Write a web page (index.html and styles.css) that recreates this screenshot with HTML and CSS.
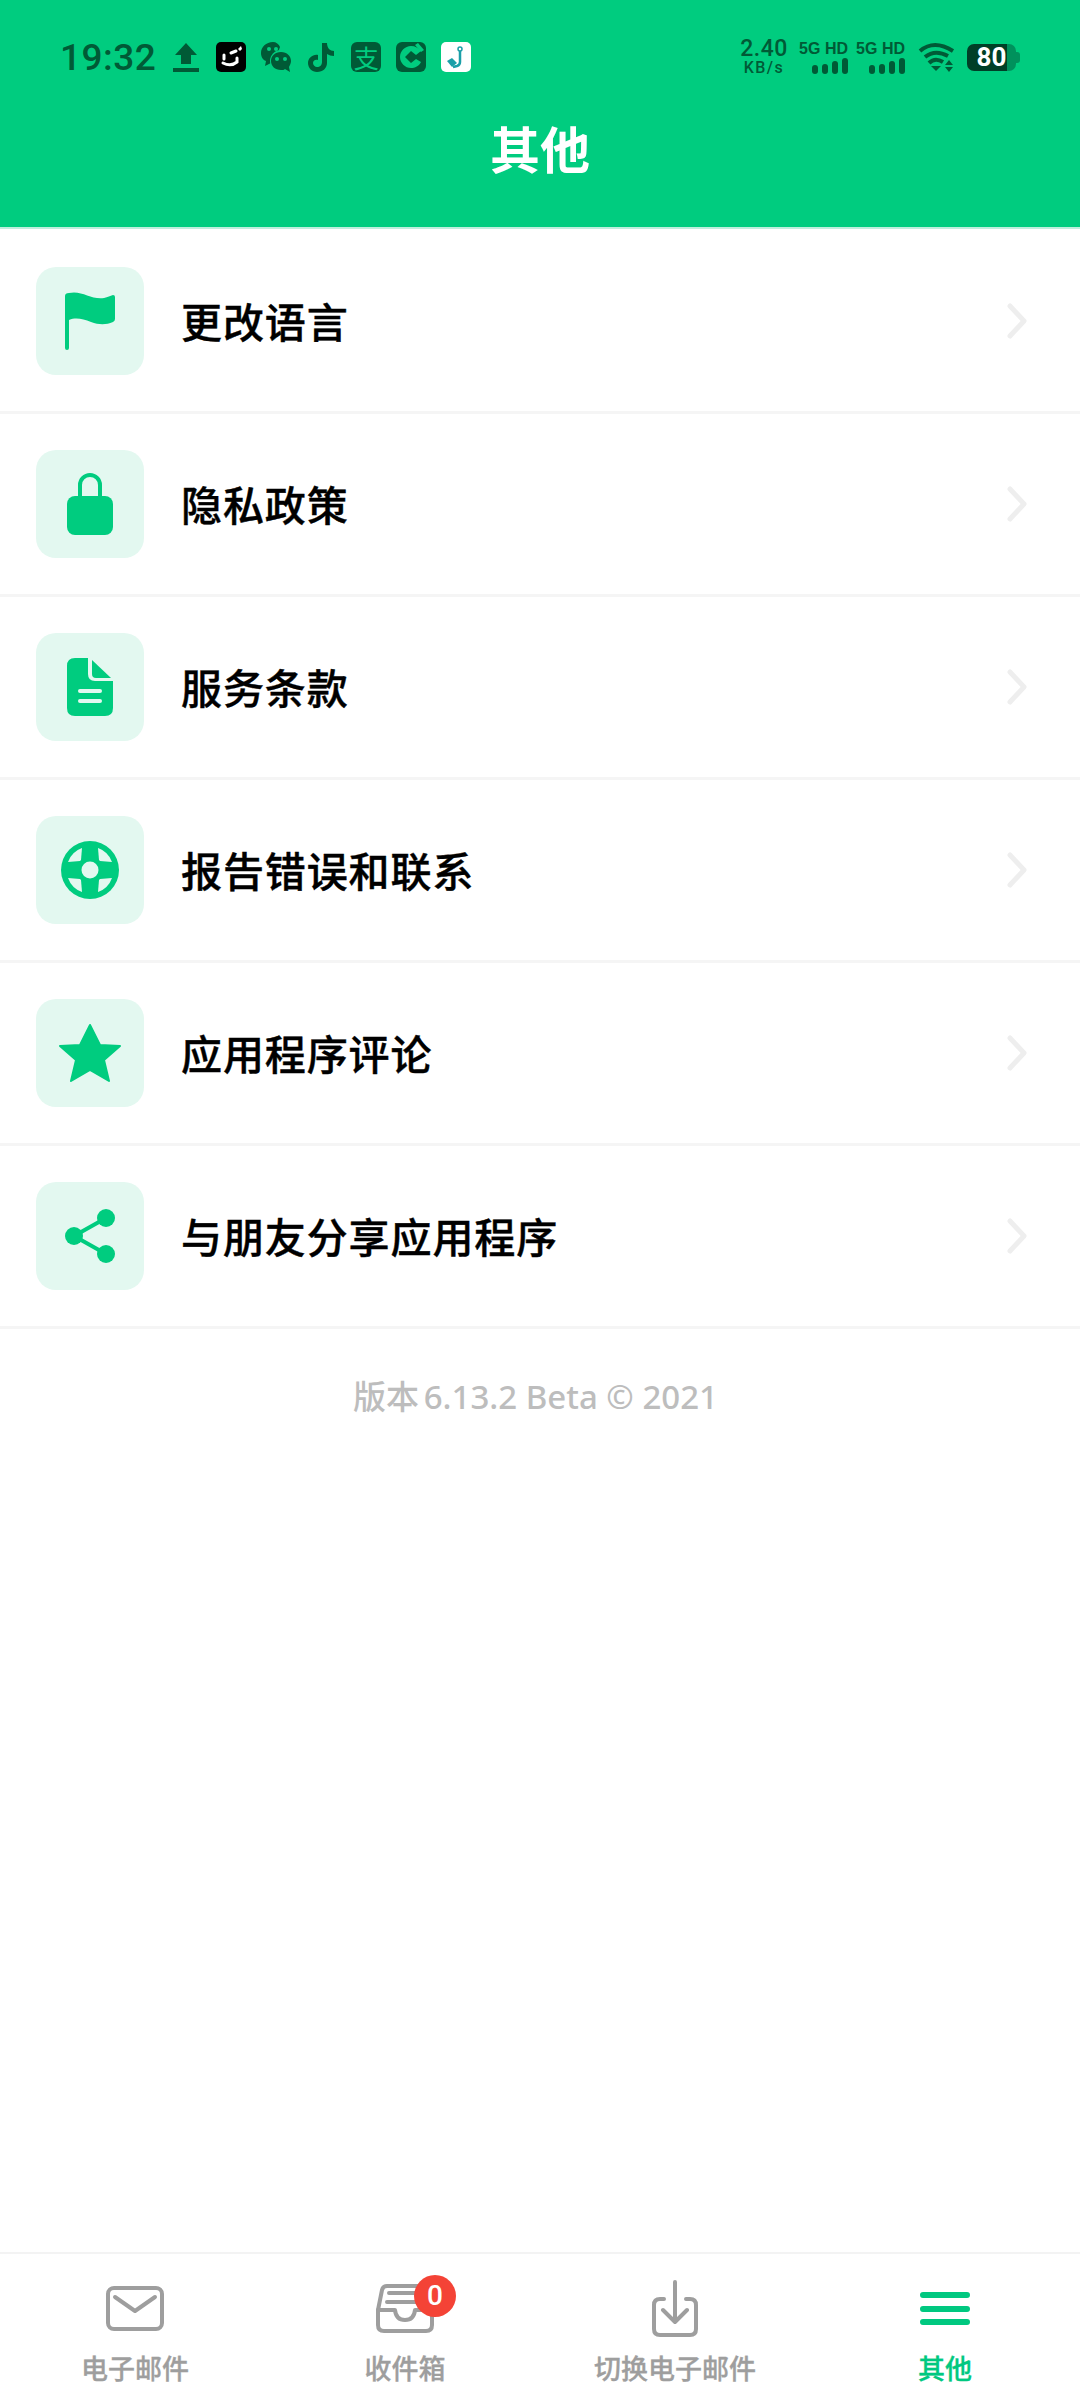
FILE: index.html
```html
<!DOCTYPE html>
<html lang="zh-CN">
<head>
    <meta charset="UTF-8">
    <meta name="viewport" content="width=device-width, initial-scale=1.0">
    <title>其他</title>
    <link rel="stylesheet" href="styles.css">
</head>
<body>

<div class="app">

    <!-- Green header with status bar -->
    <header class="header">
        <div class="status">
            <div class="status-left">
                <span class="time">19:32</span>
                <svg class="app-icon" viewBox="0 0 30 30"><path d="M15 1 L26 13 H20 V22 H10 V13 H4 Z" fill="#005a36"/><rect x="2" y="26" width="26" height="4" fill="#005a36"/></svg>
                <svg class="app-icon" viewBox="0 0 30 30"><rect width="30" height="30" rx="5" fill="#000"/><path d="M8 13 V17" stroke="#fff" stroke-width="3" stroke-linecap="round"/><path d="M7 21 Q15 25 21 20 V16" stroke="#fff" stroke-width="3" fill="none" stroke-linecap="round"/><path d="M15 11 L20 9" stroke="#fff" stroke-width="3" stroke-linecap="round"/><path d="M25 4 L26 7 L24 9 L22 7 Z" fill="#fff"/></svg>
                <svg class="app-icon" viewBox="0 0 30 30"><path d="M12 0 C5 0 0 5 0 11 C0 15 2 18 5 19 L4 24 L10 21 C12 21 13 22 13 22 L19 5 C18 2 15 0 12 0 Z" fill="#005a36"/><circle cx="20" cy="19" r="11" fill="#00cc7f"/><path d="M20 10 C14 10 10 14 10 19 C10 24 14 28 20 28 C22 28 23 28 24 27 L29 30 L28 25 C29 23 30 21 30 19 C30 14 26 10 20 10 Z" fill="#005a36"/><circle cx="8" cy="7" r="2" fill="#00cc7f"/><circle cx="15" cy="7" r="2" fill="#00cc7f"/><circle cx="16" cy="17" r="2" fill="#00cc7f"/><circle cx="24" cy="17" r="2" fill="#00cc7f"/></svg>
                <svg class="app-icon" viewBox="0 0 30 30"><path d="M16 1 H21 C21 6 24 9 28 9 V14 C25 14 23 13 21 12 V21 C21 26 17 30 11 30 C6 30 2 26 2 21 C2 16 7 12 12 13 V18 C9 17 7 19 7 21 C7 23 9 25 11 25 C14 25 16 23 16 20 Z" fill="#005a36"/></svg>
                <span class="app-square app-dark">支</span>
                <svg class="app-icon" viewBox="0 0 30 30"><rect width="30" height="30" rx="6" fill="#005a36"/><path d="M15 4 C9 4 4 9 4 15 C4 21 9 26 15 26 C19 26 23 24 25 20 L20 17 L15 21 L9 15 L15 9 L20 13 L25 9 C23 6 19 4 15 4 Z" fill="#00cc7f"/><path d="M19 3 L22 1 L28 8 L25 10 Z" fill="#00cc7f"/></svg>
                <svg class="app-icon" viewBox="0 0 30 30"><rect width="30" height="30" rx="5" fill="#fff"/><path d="M19 9 V20 Q19 23 16 24 L12 25" stroke="#1a9fa8" stroke-width="2.5" fill="none"/><circle cx="19" cy="7" r="2" fill="none" stroke="#1a9fa8" stroke-width="1.5"/><path d="M6 19 L11 16 L16 21 L11 25 Z" fill="#1a9fa8"/></svg>
            </div>
            <div class="status-right">
                <div class="speed"><span class="speed-num">2.40</span><span class="speed-unit">KB/s</span></div>
                <div class="sim">
                    <span class="sim-label">5G HD</span>
                    <svg class="bars" viewBox="0 0 36 16"><rect x="0" y="7" width="6" height="9" rx="3"/><rect x="10" y="6" width="6" height="10" rx="3"/><rect x="20" y="3" width="6" height="13" rx="3"/><rect x="30" y="0" width="6" height="16" rx="3"/></svg>
                </div>
                <div class="sim">
                    <span class="sim-label">5G HD</span>
                    <svg class="bars" viewBox="0 0 36 16"><rect x="0" y="7" width="6" height="9" rx="3"/><rect x="10" y="6" width="6" height="10" rx="3"/><rect x="20" y="3" width="6" height="13" rx="3"/><rect x="30" y="0" width="6" height="16" rx="3"/></svg>
                </div>
                <svg class="wifi" viewBox="0 0 37 30" fill="none" stroke="#005a36" stroke-width="4">
                    <path d="M2 9 Q16 -3 35 9"/>
                    <path d="M7 15 Q17 7 30 14"/>
                    <path d="M11 21 Q17 15 25 20"/>
                    <path d="M13 24 H23 L18 29 Z" fill="#005a36" stroke="none"/>
                    <path d="M31 18 L35 23 H27 Z M27 25 H35 L31 30 Z" fill="#005a36" stroke="none"/>
                </svg>
                <div class="battery"><span class="battery-level">80</span></div>
            </div>
        </div>
        <h1 class="title">其他</h1>
    </header>

    <!-- Menu list -->
    <ul class="menu">
        <li class="row">
            <span class="icon-box">
                <svg viewBox="0 0 108 108"><path d="M29 29 Q29 26 33 26 C46 23 55 33 68 31 C72 30 74 29 77 28 Q79 28 79 30 V52 Q79 54 77 55 C70 58 63 58 55 55 C47 52 40 50 33 53 V81 Q33 83 31 83 Q29 83 29 81 Z" fill="#00cc7f"/></svg>
            </span>
            <span class="row-label">更改语言</span>
            <svg class="chevron" viewBox="0 0 20 36"><path d="M3 3 L17 18 L3 33" fill="none" stroke="#eeeeee" stroke-width="5" stroke-linecap="round" stroke-linejoin="round"/></svg>
        </li>
        <li class="row">
            <span class="icon-box">
                <svg viewBox="0 0 108 108"><path d="M44 48 V35 A10 10 0 0 1 64 35 V48" fill="none" stroke="#00cc7f" stroke-width="4"/><rect x="31" y="46" width="46" height="39" rx="8" fill="#00cc7f"/></svg>
            </span>
            <span class="row-label">隐私政策</span>
            <svg class="chevron" viewBox="0 0 20 36"><path d="M3 3 L17 18 L3 33" fill="none" stroke="#eeeeee" stroke-width="5" stroke-linecap="round" stroke-linejoin="round"/></svg>
        </li>
        <li class="row">
            <span class="icon-box">
                <svg viewBox="0 0 108 108"><path d="M39 25 H52 V41 Q52 48 59 48 H77 V75 Q77 83 69 83 H39 Q31 83 31 75 V33 Q31 25 39 25 Z" fill="#00cc7f"/><path d="M56 27 L75 45 H60 Q56 45 56 41 Z" fill="#00cc7f"/><rect x="42" y="56" width="24" height="4" rx="2" fill="#e3f8f0"/><rect x="42" y="66" width="24" height="4" rx="2" fill="#e3f8f0"/></svg>
            </span>
            <span class="row-label">服务条款</span>
            <svg class="chevron" viewBox="0 0 20 36"><path d="M3 3 L17 18 L3 33" fill="none" stroke="#eeeeee" stroke-width="5" stroke-linecap="round" stroke-linejoin="round"/></svg>
        </li>
        <li class="row">
            <span class="icon-box">
                <svg viewBox="0 0 108 108">
                    <circle cx="54" cy="54" r="29" fill="#00cc7f"/>
                    <g fill="#e3f8f0">
                        <path d="M46 32 A23 23 0 0 0 32 46 L44 45 L45 44 Z"/>
                        <path d="M62 32 A23 23 0 0 1 76 46 L64 45 L63 44 Z"/>
                        <path d="M46 76 A23 23 0 0 1 32 62 L44 63 L45 64 Z"/>
                        <path d="M62 76 A23 23 0 0 0 76 62 L64 63 L63 64 Z"/>
                        <circle cx="54" cy="54" r="8.5"/>
                    </g>
                </svg>
            </span>
            <span class="row-label">报告错误和联系</span>
            <svg class="chevron" viewBox="0 0 20 36"><path d="M3 3 L17 18 L3 33" fill="none" stroke="#eeeeee" stroke-width="5" stroke-linecap="round" stroke-linejoin="round"/></svg>
        </li>
        <li class="row">
            <span class="icon-box">
                <svg viewBox="0 0 108 108"><path d="M54 26 L64 46 L84 47 L68 61 L73 82 L54 71 L35 82 L40 61 L24 47 L44 46 Z" fill="#00cc7f" stroke="#00cc7f" stroke-width="2" stroke-linejoin="round"/></svg>
            </span>
            <span class="row-label">应用程序评论</span>
            <svg class="chevron" viewBox="0 0 20 36"><path d="M3 3 L17 18 L3 33" fill="none" stroke="#eeeeee" stroke-width="5" stroke-linecap="round" stroke-linejoin="round"/></svg>
        </li>
        <li class="row">
            <span class="icon-box">
                <svg viewBox="0 0 108 108"><path d="M70 36 L38 54 L70 72" fill="none" stroke="#00cc7f" stroke-width="4"/><circle cx="70" cy="36" r="9" fill="#00cc7f"/><circle cx="38" cy="54" r="9" fill="#00cc7f"/><circle cx="70" cy="72" r="9" fill="#00cc7f"/></svg>
            </span>
            <span class="row-label">与朋友分享应用程序</span>
            <svg class="chevron" viewBox="0 0 20 36"><path d="M3 3 L17 18 L3 33" fill="none" stroke="#eeeeee" stroke-width="5" stroke-linecap="round" stroke-linejoin="round"/></svg>
        </li>
    </ul>

    <p class="version"><span class="version-cjk">版本</span> 6.13.2 Beta © 2021</p>

    <!-- Bottom tabs -->
    <nav class="tabs">
        <div class="tab">
            <span class="tab-icon">
                <svg viewBox="0 0 80 60" fill="none" stroke="#9e9e9e" stroke-width="4" stroke-linecap="round" stroke-linejoin="round"><rect x="13" y="8" width="54" height="41" rx="6"/><path d="M20 17 L40 31 L60 17"/></svg>
            </span>
            <span class="tab-label">电子邮件</span>
        </div>
        <div class="tab">
            <span class="tab-icon">
                <svg viewBox="0 0 80 60" fill="none" stroke="#9e9e9e" stroke-width="4" stroke-linecap="round" stroke-linejoin="round"><path d="M13 30 L17 10 Q18 6 22 6 H58 Q62 6 63 10 L67 30"/><path d="M24 13 H56 M22 22 H58"/><path d="M13 30 H30 Q31 40 40 40 Q49 40 50 30 H67 V45 Q67 51 61 51 H19 Q13 51 13 45 Z"/></svg>
                <span class="badge">0</span>
            </span>
            <span class="tab-label">收件箱</span>
        </div>
        <div class="tab">
            <span class="tab-icon">
                <svg viewBox="0 0 80 60" fill="none" stroke="#9e9e9e" stroke-width="4" stroke-linecap="round" stroke-linejoin="round"><path d="M29 19 H25 Q19 19 19 25 V49 Q19 55 25 55 H55 Q61 55 61 49 V25 Q61 19 55 19 H51"/><path d="M40 2 V41 M28 30 L40 42 L52 30"/></svg>
            </span>
            <span class="tab-label">切换电子邮件</span>
        </div>
        <div class="tab tab-active">
            <span class="tab-icon">
                <svg viewBox="0 0 80 60" fill="none" stroke="#00c880" stroke-width="6" stroke-linecap="round"><path d="M18 15 H62 M18 29 H62 M18 42 H62"/></svg>
            </span>
            <span class="tab-label">其他</span>
        </div>
    </nav>
</div>

</body>
</html>
```

FILE: styles.css
```css
* {
    box-sizing: border-box;
}

body {
    margin: 0;
    background-color: #ffffff;
    font-family: "Noto Sans", "Noto Sans CJK SC", sans-serif;
}

.app {
    display: flex;
    flex-direction: column;
    width: 1080px;
    height: 2400px;
}

/* Header */
.header {
    height: 229px;
    background-color: #00cc7f;
    border-bottom: 2px solid #bfeedd;
}

.status {
    display: flex;
    justify-content: space-between;
    align-items: center;
    height: 74px;
    padding: 40px 60px 0 60px;
    color: #005a36;
}

.status-left {
    display: flex;
    align-items: center;
    gap: 15px;
}

.time {
    margin-right: 0;
    font-family: "Roboto", sans-serif;
    font-size: 37px;
    font-weight: 500;
    letter-spacing: 0.5px;
}

.app-icon {
    display: block;
    width: 30px;
    height: 30px;
}

.app-square {
    display: flex;
    justify-content: center;
    align-items: center;
    width: 30px;
    height: 30px;
    border-radius: 6px;
    font-family: "Noto Sans CJK SC", sans-serif;
    font-size: 25px;
    line-height: 1;
}

.app-dark {
    background-color: #005a36;
    color: #00cc7f;
}

.status-right {
    display: flex;
    align-items: center;
}

.speed {
    display: flex;
    flex-direction: column;
    align-items: center;
    width: 48px;
    margin-right: 12px;
    font-family: "Roboto", sans-serif;
    font-weight: 500;
}

.speed-num {
    font-size: 23px;
    letter-spacing: 0.5px;
    line-height: 22px;
}

.speed-unit {
    font-size: 16px;
    letter-spacing: 1.5px;
    line-height: 16px;
    white-space: nowrap;
}

.sim {
    display: flex;
    flex-direction: column;
    align-items: flex-end;
    width: 48px;
    margin-right: 9px;
}

.sim-label {
    font-family: "Liberation Sans", sans-serif;
    font-size: 16px;
    font-weight: 700;
    line-height: 16px;
    white-space: nowrap;
}

.bars {
    display: block;
    width: 36px;
    height: 16px;
    margin-top: 1px;
    fill: #005a36;
}

.wifi {
    display: block;
    width: 37px;
    height: 30px;
    margin: 0 12px 0 4px;
}

.battery {
    position: relative;
    width: 49px;
    height: 27px;
    margin-right: 4px;
    border-radius: 7px;
    background: linear-gradient(to right, #003f27 82%, #00915c 82%);
}

.battery::after {
    content: "";
    position: absolute;
    top: 8px;
    right: -4px;
    width: 4px;
    height: 11px;
    border-radius: 0 3px 3px 0;
    background-color: #00915c;
}

.battery-level {
    display: block;
    color: #ffffff;
    font-family: "Roboto", sans-serif;
    font-size: 26px;
    font-weight: 700;
    line-height: 27px;
    text-align: center;
}

.title {
    margin: 0;
    height: 153px;
    padding-top: 41px;
    color: #ffffff;
    font-family: "Noto Sans CJK SC", sans-serif;
    font-size: 50px;
    font-weight: 700;
    line-height: 64px;
    text-align: center;
}

/* Menu */
.menu {
    margin: 2px 0 0 0;
    padding: 0;
    list-style: none;
}

.row {
    display: flex;
    align-items: center;
    height: 183px;
    padding: 0 53px 0 36px;
    border-bottom: 3px solid #f5f5f5;
}

.icon-box {
    display: block;
    flex: none;
    width: 108px;
    height: 108px;
    border-radius: 20px;
    background-color: #e3f8f0;
}

.icon-box svg {
    display: block;
    width: 108px;
    height: 108px;
}

.row-label {
    flex: 1;
    margin-left: 37px;
    padding-bottom: 2px;
    color: #000000;
    font-family: "Noto Sans CJK SC", sans-serif;
    font-size: 41px;
    font-weight: 500;
    letter-spacing: 0.9px;
    -webkit-text-stroke: 0.4px #000000;
}

.chevron {
    display: block;
    width: 20px;
    height: 36px;
}

.version {
    flex: 1;
    margin: 0;
    padding-top: 46px;
    padding-right: 9px;
    color: #bdbdbd;
    font-size: 33px;
    font-weight: 500;
    line-height: 44px;
    text-align: center;
}

.version-cjk {
    margin-right: -4px;
}

/* Bottom tabs */
.tabs {
    display: grid;
    grid-template-columns: repeat(4, 1fr);
    height: 148px;
    padding-top: 26px;
    border-top: 2px solid #f3f3f3;
}

.tab {
    display: flex;
    flex-direction: column;
    align-items: center;
}

.tab-icon {
    position: relative;
    display: block;
    width: 80px;
    height: 60px;
}

.tab-icon svg {
    display: block;
    width: 80px;
    height: 60px;
}

.tab-label {
    margin-top: 9px;
    color: #9e9e9e;
    font-family: "Noto Sans CJK SC", sans-serif;
    font-size: 27px;
    font-weight: 500;
    line-height: 38px;
    -webkit-text-stroke: 0.3px currentColor;
}

.tab-active .tab-label {
    color: #00c880;
}

.badge {
    position: absolute;
    top: -5px;
    left: 49px;
    width: 42px;
    height: 42px;
    border-radius: 50%;
    background-color: #f44336;
    color: #ffffff;
    font-family: "Roboto", sans-serif;
    font-size: 28px;
    font-weight: 500;
    line-height: 42px;
    text-align: center;
}
```
